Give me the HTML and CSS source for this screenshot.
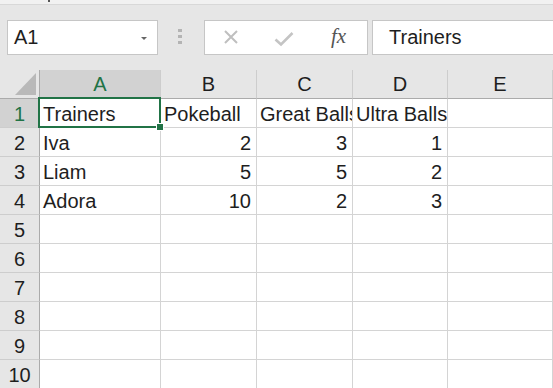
FILE: index.html
```html
<!DOCTYPE html>
<html lang="en">
<head>
  <meta charset="UTF-8" />
  <title>Trainers - Excel</title>
  <link rel="stylesheet" href="styles.css">
</head>
<body>
  <div class="title-strip"><span class="tick"></span></div>

  <div class="toolbar">
    <div class="name-box">
      <span>A1</span>
      <span class="drop"></span>
    </div>
    <div class="grip"><i></i><i></i><i></i></div>
    <div class="fn-box">
      <svg class="icon-x" width="16" height="16" viewBox="0 0 16 16">
        <path d="M2 2 L14 14 M14 2 L2 14" stroke="#bfbfbf" stroke-width="2" fill="none"/>
      </svg>
      <svg class="icon-check" width="20" height="16" viewBox="0 0 20 16">
        <path d="M1.5 8.5 L7 13.5 L18.5 2" stroke="#c4c4c4" stroke-width="2.6" fill="none"/>
      </svg>
      <span class="fx">fx</span>
    </div>
    <div class="formula">Trainers</div>
  </div>

  <div class="sheet">
    <div class="corner"></div>
    <div class="col-head active">A</div>
    <div class="col-head">B</div>
    <div class="col-head">C</div>
    <div class="col-head">D</div>
    <div class="col-head">E</div>

    <div class="row-head active">1</div>
    <div class="cell selected">Trainers<div class="selection"><span class="handle"></span></div></div>
    <div class="cell">Pokeball</div>
    <div class="cell">Great Balls</div>
    <div class="cell">Ultra Balls</div>
    <div class="cell"></div>

    <div class="row-head">2</div>
    <div class="cell">Iva</div>
    <div class="cell num">2</div>
    <div class="cell num">3</div>
    <div class="cell num">1</div>
    <div class="cell"></div>

    <div class="row-head">3</div>
    <div class="cell">Liam</div>
    <div class="cell num">5</div>
    <div class="cell num">5</div>
    <div class="cell num">2</div>
    <div class="cell"></div>

    <div class="row-head">4</div>
    <div class="cell">Adora</div>
    <div class="cell num">10</div>
    <div class="cell num">2</div>
    <div class="cell num">3</div>
    <div class="cell"></div>

    <div class="row-head">5</div>
    <div class="cell"></div><div class="cell"></div><div class="cell"></div><div class="cell"></div><div class="cell"></div>
    <div class="row-head">6</div>
    <div class="cell"></div><div class="cell"></div><div class="cell"></div><div class="cell"></div><div class="cell"></div>
    <div class="row-head">7</div>
    <div class="cell"></div><div class="cell"></div><div class="cell"></div><div class="cell"></div><div class="cell"></div>
    <div class="row-head">8</div>
    <div class="cell"></div><div class="cell"></div><div class="cell"></div><div class="cell"></div><div class="cell"></div>
    <div class="row-head">9</div>
    <div class="cell"></div><div class="cell"></div><div class="cell"></div><div class="cell"></div><div class="cell"></div>
    <div class="row-head">10</div>
    <div class="cell"></div><div class="cell"></div><div class="cell"></div><div class="cell"></div><div class="cell"></div>
  </div>
</body>
</html>
```

FILE: styles.css
```css
:root {
  --bar-bg: #e6e6e6;
  --grid-line: #d4d4d4;
  --head-line: #ababab;
  --excel-green: #217346;
  --text: #1e1e1e;
}

body {
  margin: 0;
  width: 553px;
  height: 388px;
  overflow: hidden;
  background: #ffffff;
  color: var(--text);
  font-family: "Liberation Sans", Arial, sans-serif;
}

.title-strip {
  height: 4px;
  background: #f1f1f1;
  border-bottom: 1px solid #d8d8d8;
  padding-left: 48px;
}

.tick {
  display: block;
  width: 2px;
  height: 2px;
  background: #555;
}

/* formula bar row */
.toolbar {
  height: 65px;
  box-sizing: border-box;
  background: var(--bar-bg);
  display: flex;
  align-items: flex-start;
  padding: 15px 0 0 7px;
}

.name-box,
.fn-box,
.formula {
  height: 35px;
  box-sizing: border-box;
  background: #ffffff;
  border: 1px solid #c6c6c6;
  display: flex;
  align-items: center;
}

.name-box {
  width: 151px;
  padding: 0 10px 0 6px;
  font-size: 20px;
  justify-content: space-between;
}

.drop {
  width: 0;
  height: 0;
  border-left: 3px solid transparent;
  border-right: 3px solid transparent;
  border-top: 3px solid #666;
  margin-top: 1px;
}

.grip {
  width: 4px;
  margin: 9px 22px 0 20px;
  display: flex;
  flex-direction: column;
  gap: 3px;
}

.grip i {
  display: block;
  height: 3px;
  background: #b4b4b4;
}

.fn-box {
  width: 164px;
  padding-left: 18px;
}

.icon-x {
  margin-top: -1px;
}

.icon-check {
  margin-left: 35px;
  margin-top: 3px;
}

.fx {
  margin-left: 37px;
  font-family: "Liberation Serif", "Times New Roman", serif;
  font-style: italic;
  font-size: 21px;
  color: #555;
  margin-top: -2px;
}

.formula {
  flex: 1;
  margin-left: 4px;
  border-right: none;
  padding-left: 16px;
  font-size: 20px;
}

/* sheet grid */
.sheet {
  display: grid;
  grid-template-columns: 40px 121px 96px 96px 95px 1fr;
  grid-auto-rows: 29px;
  font-size: 20px;
}

.corner,
.col-head,
.row-head,
.cell {
  box-sizing: border-box;
  border-right: 1px solid var(--grid-line);
  border-bottom: 1px solid var(--grid-line);
  white-space: nowrap;
  overflow: hidden;
}

.corner,
.col-head {
  background: var(--bar-bg);
  border-bottom-color: var(--head-line);
  border-right-color: #cdcdcd;
  line-height: 28px;
  text-align: center;
}

.corner {
  position: relative;
  border-right-color: var(--head-line);
}

.corner::after {
  content: "";
  position: absolute;
  right: 3px;
  bottom: 3px;
  border-left: 21px solid transparent;
  border-bottom: 22px solid #b9b9b9;
}

.row-head {
  background: var(--bar-bg);
  border-right-color: var(--head-line);
  border-bottom-color: #cdcdcd;
  text-align: center;
  line-height: 30px;
}

.col-head.active,
.row-head.active {
  background: #d2d2d2;
  color: var(--excel-green);
}

.cell {
  line-height: 30px;
  padding: 0 5px 0 3px;
}

.cell.num {
  text-align: right;
}

.cell.selected {
  position: relative;
  overflow: visible;
}

.selection {
  position: absolute;
  top: -2px;
  left: -2px;
  right: -1px;
  bottom: -1px;
  border: 2px solid var(--excel-green);
}

.handle {
  position: absolute;
  right: -5px;
  bottom: -5px;
  width: 6px;
  height: 6px;
  background: var(--excel-green);
  border: 1px solid #ffffff;
}
```
